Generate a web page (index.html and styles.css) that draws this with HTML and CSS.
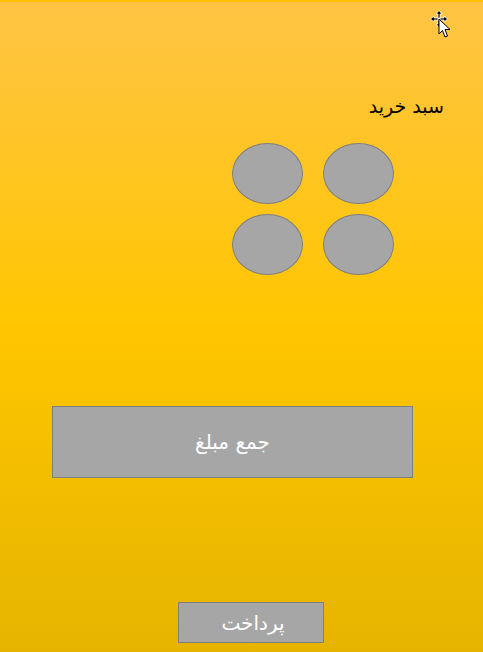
FILE: index.html
```html
<!DOCTYPE html>
<html lang="fa">
<head>
<meta charset="utf-8">
<link rel="stylesheet" href="styles.css">
</head>
<body>
<div class="page">
  <div class="title" dir="rtl">سبد خرید</div>
  <div class="grid">
    <div class="dot"></div>
    <div class="dot"></div>
    <div class="dot"></div>
    <div class="dot"></div>
  </div>
  <div class="total" dir="rtl">جمع مبلغ</div>
  <div class="pay" dir="rtl">پرداخت</div>
  <svg class="cursor" width="24" height="30" viewBox="0 0 24 30">
    <g fill="#000" stroke="#fff" stroke-width="0.8" stroke-linejoin="round">
      <path d="M9 0.5 L12 4 L10 4 L10 8 L8 8 L8 4 L6 4 Z"/>
      <path d="M9 17.5 L12 14 L10 14 L10 10 L8 10 L8 14 L6 14 Z"/>
      <path d="M0.5 9 L4 6 L4 8 L8 8 L8 10 L4 10 L4 12 Z"/>
      <path d="M17.5 9 L14 6 L14 8 L10 8 L10 10 L14 10 L14 12 Z"/>
    </g>
    <path d="M9 9 L9 24 L12.5 20.5 L15 27 L17.5 26 L15 19.5 L20 19.5 Z" fill="#fff" stroke="#000" stroke-width="1" stroke-linejoin="round"/>
  </svg>
</div>
</body>
</html>
```
FILE: styles.css
```css
html, body {
  margin: 0;
  padding: 0;
}
body {
  width: 483px;
  height: 652px;
  overflow: hidden;
  font-family: "DejaVu Sans", sans-serif;
}
.page {
  position: relative;
  box-sizing: border-box;
  height: 652px;
  border-top: 2px solid #ffc000;
  background: linear-gradient(180deg, #ffc444 0%, #ffc600 50%, #e6b400 100%);
  display: flex;
  flex-direction: column;
}
.title {
  align-self: flex-end;
  margin-top: 92px;
  margin-right: 39px;
  font-size: 19px;
  line-height: 24px;
  color: #000;
}
.grid {
  align-self: flex-end;
  margin-top: 25px;
  margin-right: 89px;
  display: grid;
  grid-template-columns: 71px 71px;
  grid-auto-rows: 61px;
  column-gap: 20px;
  row-gap: 10px;
}
.dot {
  box-sizing: border-box;
  border: 1px solid #7f7f7f;
  border-radius: 50%;
  background: #a6a6a6;
}
.total {
  margin-top: 131px;
  margin-left: 52px;
  width: 361px;
  height: 72px;
  box-sizing: border-box;
  border: 1px solid #7f7f7f;
  background: #a6a6a6;
  color: #fff;
  font-size: 20px;
  display: flex;
  align-items: center;
  justify-content: center;
}
.pay {
  margin-top: 124px;
  margin-left: 178px;
  width: 146px;
  height: 41px;
  box-sizing: border-box;
  border: 1px solid #7f7f7f;
  background: #a6a6a6;
  color: #fff;
  font-size: 20px;
  display: flex;
  align-items: center;
  justify-content: center;
  padding-left: 4px;
}
.cursor {
  position: absolute;
  top: 8px;
  left: 430px;
}
```
